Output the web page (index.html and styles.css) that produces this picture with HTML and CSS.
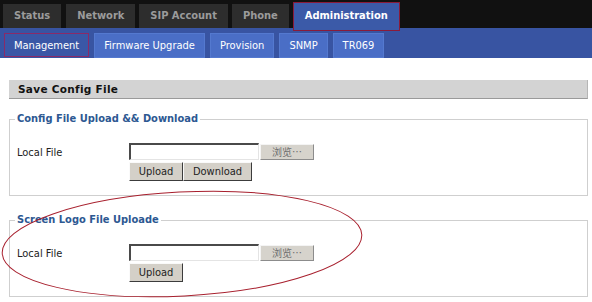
FILE: index.html
```html
<!DOCTYPE html>
<html>
<head>
<meta charset="utf-8">
<title>Administration - Management</title>
<link rel="stylesheet" href="styles.css">
</head>
<body>
<div class="topnav">
  <div class="tab tab-first">Status</div>
  <div class="tab">Network</div>
  <div class="tab">SIP Account</div>
  <div class="tab">Phone</div>
  <div class="tab active">Administration</div>
</div>
<div class="subnav">
  <div class="subtab active">Management</div>
  <div class="subtab">Firmware Upgrade</div>
  <div class="subtab">Provision</div>
  <div class="subtab">SNMP</div>
  <div class="subtab">TR069</div>
</div>
<div class="content">
  <div class="section-title">Save Config File</div>
  <fieldset class="group">
    <legend>Config File Upload &amp;&amp; Download</legend>
    <div class="row">
      <div class="label">Local File</div>
      <div class="controls">
        <div class="line">
          <span class="file-input"></span><span class="browse">浏览…</span>
        </div>
        <div class="line">
          <span class="btn">Upload</span><span class="btn btn-wide">Download</span>
        </div>
      </div>
    </div>
  </fieldset>
  <fieldset class="group group-second">
    <legend>Screen Logo File Uploade</legend>
    <div class="row">
      <div class="label">Local File</div>
      <div class="controls">
        <div class="line">
          <span class="file-input"></span><span class="browse">浏览…</span>
        </div>
        <div class="line">
          <span class="btn">Upload</span>
        </div>
      </div>
    </div>
  </fieldset>
</div>
<svg class="mark" width="592" height="302" viewBox="0 0 592 302">
  <ellipse cx="182" cy="244" rx="180" ry="52" transform="rotate(-3 182 244)" fill="none" stroke="#a8202e" stroke-width="1"/>
</svg>
</body>
</html>
```
FILE: styles.css
```css
* { box-sizing: border-box; }
html, body { margin: 0; padding: 0; background: #fff; }
body {
  font-family: "DejaVu Sans Condensed", "Liberation Sans", sans-serif;
  font-size: 11px;
  color: #222;
  width: 592px;
  height: 302px;
  overflow: hidden;
  position: relative;
}
.topnav {
  height: 28px;
  background: #111;
  display: flex;
  align-items: flex-end;
  padding-left: 3px;
  gap: 4px;
}
.tab {
  height: 24px;
  line-height: 24px;
  background: #2d2d2d;
  color: #9b9b9b;
  font-weight: bold;
  font-size: 11px;
  padding: 0 11px;
}
.tab-first { margin-right: 1px; }
.tab.active {
  position: relative;
  z-index: 1;
  height: 29px;
  margin-bottom: -3px;
  line-height: 26px;
  background: #3b5aa8;
  color: #fff;
  border: 1px solid #8a1b3a;
  padding: 0 11px;
}
.subnav {
  height: 30px;
  background: #3854a2;
  display: flex;
  align-items: flex-start;
  padding: 5px 0 0 4px;
  gap: 5px;
}
.subtab {
  height: 25px;
  line-height: 24px;
  background: #4a6ec6;
  color: #fff;
  font-size: 11px;
  padding: 0 9px;
  border: 1px solid #5479cf;
}
.subtab.active {
  height: 24px;
  background: #3a57a6;
  border: 1px solid #8a2a68;
}
.content {
  margin: 22px 4px 0 9px;
}
.section-title {
  height: 19px;
  line-height: 18px;
  background: #d3d3d3;
  border-bottom: 1px solid #9a9a9a;
  border-right: 1px solid #b5b5b5;
  font-family: "DejaVu Sans", sans-serif;
  font-weight: bold;
  font-size: 10.5px;
  color: #111;
  padding-left: 9px;
  letter-spacing: 0.3px;
}
.group {
  margin: 13px 0 0 0;
  padding: 17px 7px 14px 7px;
  border: 1px solid #cfcfcf;
  min-width: 0;
}
.group-second { margin-top: 17px; }
.group legend {
  font-weight: bold;
  font-size: 11px;
  line-height: 14px;
  color: #2d5892;
  padding: 0 2px;
  margin-left: -2px;
}
.row {
  display: flex;
  align-items: flex-start;
}
.label {
  width: 112px;
  line-height: 17px;
  padding-top: 1px;
  color: #222;
}
.controls {
  display: flex;
  flex-direction: column;
  gap: 2px;
}
.line {
  display: flex;
  align-items: center;
  gap: 1px;
}
.file-input {
  display: block;
  width: 130px;
  height: 17px;
  background: #fff;
  border-style: solid;
  border-width: 2px 1px 1px 2px;
  border-color: #4a4a4a #e4e4e4 #e4e4e4 #4a4a4a;
}
.browse {
  display: block;
  width: 54px;
  height: 16px;
  line-height: 14px;
  text-align: center;
  background: #d6d3cc;
  color: #6e6e6e;
  font-family: "Noto Sans CJK SC", sans-serif;
  font-size: 10px;
  border: 1px solid;
  border-color: #f4f4f4 #8c8c8c #8c8c8c #f4f4f4;
}
.btn {
  display: block;
  width: 54px;
  height: 19px;
  line-height: 17px;
  text-align: center;
  background: #d4d0c8;
  color: #222;
  border: 1px solid;
  border-color: #fafafa #3c3c3c #3c3c3c #fafafa;
}
.btn-wide { width: 69px; }
.line .btn + .btn { margin-left: -1px; }
.mark {
  position: absolute;
  left: 0;
  top: 0;
  pointer-events: none;
}
```
